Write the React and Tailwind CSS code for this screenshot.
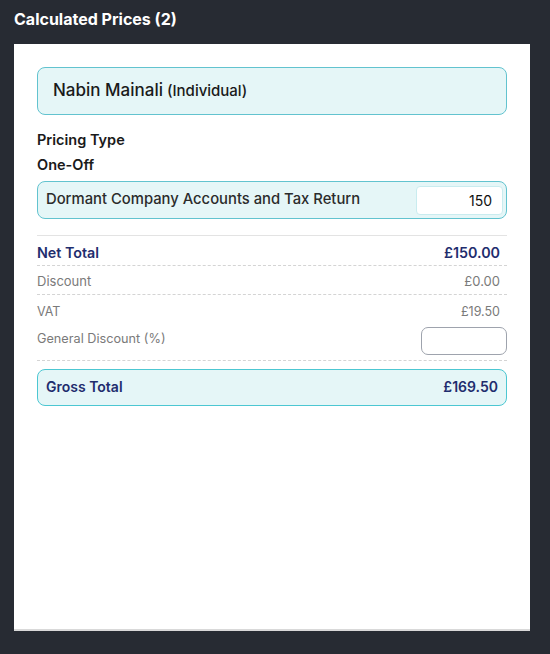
import React from 'react';

export default function App() {
  return (
    <div
      className="w-[550px] h-[654px] bg-[#272b33] flex flex-col px-[14px]"
      style={{ fontFamily: 'Inter, "Noto Sans", sans-serif' }}
    >
      <h2 className="h-[44px] flex items-center pb-[7px] text-white font-bold text-[16px]">
        Calculated Prices (2)
      </h2>

      <div className="w-[516px] h-[587px] bg-white border-b-2 border-[#d9d9d9] px-[23px] pt-[23px]">
        {/* Customer */}
        <div className="h-[48px] rounded-[8px] border border-[#62c3cf] bg-[#e5f6f7] flex items-center px-[15px] text-[#1a1a1a]">
          <span className="text-[17px] font-medium">Nabin Mainali</span>
          <span className="ml-[4px] text-[15px] font-medium">(Individual)</span>
        </div>

        <p className="mt-[15px] text-[14.5px] font-semibold text-[#1a1a1a] leading-[20px]">Pricing Type</p>
        <p className="mt-[5px] text-[14.5px] font-semibold text-[#1a1a1a] leading-[20px]">One-Off</p>

        {/* Service */}
        <div className="mt-[6px] h-[38px] rounded-[8px] border border-[#62c3cf] bg-[#e5f6f7] flex items-center justify-between pl-[8px] pr-[3px]">
          <span className="text-[14.8px] font-medium text-[#2b2b2b] -mt-[1px]">Dormant Company Accounts and Tax Return</span>
          <input
            defaultValue="150"
            className="w-[87px] h-[29px] bg-white rounded-[4px] border border-[#c9ecef] text-right pr-[10px] text-[14px] text-[#111] outline-none"
          />
        </div>

        {/* Totals */}
        <div className="mt-[16px] border-t border-[#e3e3e3]">
          <div className="h-[30px] flex items-center justify-between pt-[4px] pr-[7px] border-b border-dashed border-[#d4d4d4] text-[#1f2d6e] font-semibold text-[14.3px]">
            <span>Net Total</span>
            <span>£150.00</span>
          </div>
          <div className="h-[29px] flex items-center justify-between pt-[4px] pr-[7px] border-b border-dashed border-[#d4d4d4] text-[#7a7a7a] text-[13px]">
            <span>Discount</span>
            <span>£0.00</span>
          </div>
          <div className="h-[30px] flex items-center justify-between pt-[4px] pr-[7px] text-[#7a7a7a] text-[12.5px]">
            <span>VAT</span>
            <span>£19.50</span>
          </div>
          <div className="h-[36px] flex items-start justify-between border-b border-dashed border-[#d4d4d4]">
            <span className="text-[#7a7a7a] text-[12.7px] mt-[4px]">General Discount (%)</span>
            <input className="w-[86px] h-[28px] rounded-[7px] border border-[#9ea3ad] outline-none mt-[2px]" />
          </div>
          <div className="mt-[8px] h-[37px] rounded-[8px] border border-[#4cc7d2] bg-[#e5f6f7] flex items-center justify-between px-[8px] pb-[3px] text-[#1f2d6e] font-semibold text-[14px]">
            <span>Gross Total</span>
            <span>£169.50</span>
          </div>
        </div>
      </div>
    </div>
  );
}
